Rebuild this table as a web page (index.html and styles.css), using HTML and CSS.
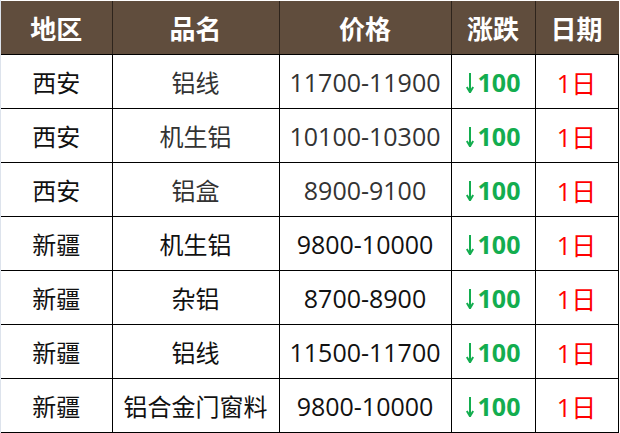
FILE: index.html
```html
<!DOCTYPE html>
<html lang="zh">
<head>
<meta charset="utf-8">
<link rel="stylesheet" href="styles.css">
</head>
<body>
<div class="wrap">
<table class="price">
  <colgroup>
    <col class="c1"><col class="c2"><col class="c3"><col class="c4"><col class="c5">
  </colgroup>
  <thead>
    <tr><th>地区</th><th>品名</th><th>价格</th><th>涨跌</th><th>日期</th></tr>
  </thead>
  <tbody>
    <tr><td>西安</td><td class="name">铝线</td><td class="num">11700-11900</td><td class="chg"><svg class="arrow" viewBox="0 0 8 20" width="8" height="20"><path d="M4 0V19M0.8 14L4 19.3L7.2 14"/></svg>100</td><td class="date">1日</td></tr>
    <tr><td>西安</td><td class="name">机生铝</td><td class="num">10100-10300</td><td class="chg"><svg class="arrow" viewBox="0 0 8 20" width="8" height="20"><path d="M4 0V19M0.8 14L4 19.3L7.2 14"/></svg>100</td><td class="date">1日</td></tr>
    <tr><td>西安</td><td class="name">铝盒</td><td class="num">8900-9100</td><td class="chg"><svg class="arrow" viewBox="0 0 8 20" width="8" height="20"><path d="M4 0V19M0.8 14L4 19.3L7.2 14"/></svg>100</td><td class="date">1日</td></tr>
    <tr><td>新疆</td><td>机生铝</td><td class="num dark">9800-10000</td><td class="chg"><svg class="arrow" viewBox="0 0 8 20" width="8" height="20"><path d="M4 0V19M0.8 14L4 19.3L7.2 14"/></svg>100</td><td class="date">1日</td></tr>
    <tr><td>新疆</td><td>杂铝</td><td class="num dark">8700-8900</td><td class="chg"><svg class="arrow" viewBox="0 0 8 20" width="8" height="20"><path d="M4 0V19M0.8 14L4 19.3L7.2 14"/></svg>100</td><td class="date">1日</td></tr>
    <tr><td>新疆</td><td>铝线</td><td class="num dark">11500-11700</td><td class="chg"><svg class="arrow" viewBox="0 0 8 20" width="8" height="20"><path d="M4 0V19M0.8 14L4 19.3L7.2 14"/></svg>100</td><td class="date">1日</td></tr>
    <tr><td>新疆</td><td>铝合金门窗料</td><td class="num dark">9800-10000</td><td class="chg"><svg class="arrow" viewBox="0 0 8 20" width="8" height="20"><path d="M4 0V19M0.8 14L4 19.3L7.2 14"/></svg>100</td><td class="date">1日</td></tr>
  </tbody>
</table>
</div>
</body>
</html>
```

FILE: styles.css
```css
html, body {
  margin: 0;
  padding: 0;
  background: #ffffff;
}
.wrap {
  padding-top: 1px;
  border-left: 1px solid #dde3ec;
  width: 617px;
}
.price {
  border-collapse: collapse;
  table-layout: fixed;
  width: 617px;
  font-family: "Open Sans", "Noto Sans CJK SC", sans-serif;
  font-size: 24px;
  color: #111111;
}
.c1 { width: 111px; }
.c2 { width: 167px; }
.c3 { width: 172px; }
.c4 { width: 84px; }
.c5 { width: 83px; }
.price th {
  background: #604d3d;
  color: #ffffff;
  font-weight: 700;
  height: 53px;
  padding: 0;
  border-right: 1px solid #2e241c;
  border-bottom: 1px solid #000000;
  text-align: center;
  font-family: "Noto Sans CJK SC", sans-serif;
  font-size: 26px;
}
.price th:last-child { border-right: 1px solid #604d3d; }
.price td {
  height: 53px;
  padding: 0;
  text-align: center;
  border-right: 1px solid #000000;
  border-bottom: 1px solid #000000;
  font-family: "Open Sans", "Noto Sans CJK SC", sans-serif;
}
.name, .num { color: #333333; }
.num { font-size: 25px; }
.num.dark { color: #111111; }
.chg {
  color: #13ad4f;
  font-weight: 700;
  font-size: 25px;
}
.arrow {
  vertical-align: -1px;
  margin-right: 4px;
  fill: none;
  stroke: #13ad4f;
  stroke-width: 2;
}
.date {
  color: #ff0000;
  font-size: 25px;
}
```
